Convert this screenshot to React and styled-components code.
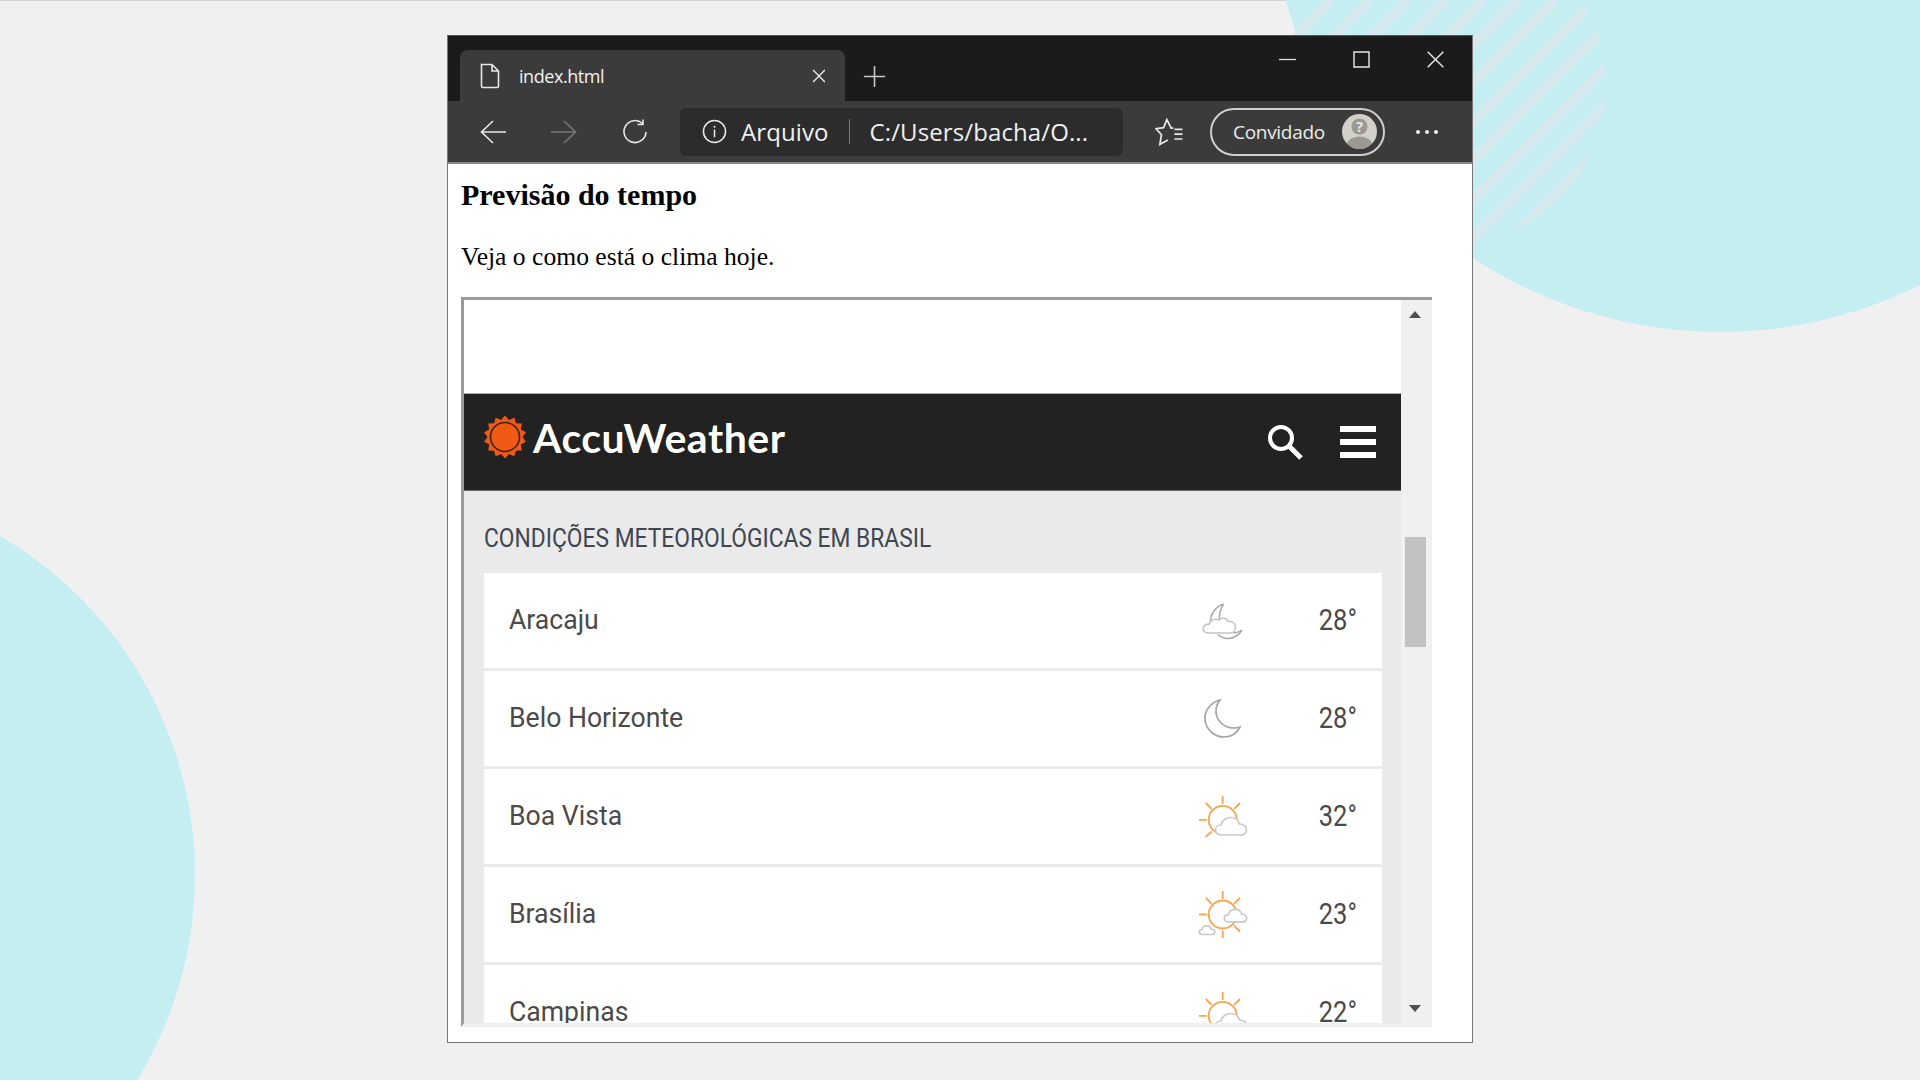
import React from 'react';
import styled, { createGlobalStyle } from 'styled-components';

const GlobalStyle = createGlobalStyle`
	html, body {
		margin: 0;
		padding: 0;
	}
	* {
		box-sizing: border-box;
	}
`;

const Page = styled.div`
	position: relative;
	width: 1920px;
	height: 1080px;
	overflow: hidden;
	background: #f0f0f0;
	padding: 35px 0 0 447px;
`;
const TopLine = styled.div`
	position: absolute;
	top: 0;
	left: 0;
	width: 1288px;
	height: 1px;
	background: #d2d2d2;
`;
const Blob = styled.div`
	position: absolute;
	left: ${(p) => p.$x - p.$r}px;
	top: ${(p) => p.$y - p.$r}px;
	width: ${(p) => p.$r * 2}px;
	height: ${(p) => p.$r * 2}px;
	border-radius: 50%;
	background: #c5eef2;
`;
const Stripes = styled.svg`
	position: absolute;
	top: 0;
	left: 1280px;
`;

const Window = styled.div`
	position: relative;
	display: flex;
	flex-direction: column;
	width: 1026px;
	height: 1008px;
	background: #fff;
	border: 1px solid #777;
	border-top-color: #555;
`;
const TitleBar = styled.div`
	display: flex;
	align-items: flex-start;
	height: 65px;
	padding-left: 12px;
	background: #1b1b1b;
`;
const Tab = styled.div`
	display: flex;
	align-items: center;
	width: 385px;
	height: 51px;
	margin-top: 14px;
	padding: 0 19px 0 17px;
	background: #3b3b3b;
	border-radius: 8px 8px 0 0;
	color: #f2f2f2;
	font: 400 18px 'Open Sans', sans-serif;
	letter-spacing: -0.45px;
`;
const TabName = styled.span`
	margin-left: 16px;
	flex: 1;
`;
const NewTab = styled.div`
	display: flex;
	justify-content: center;
	width: 58px;
	margin-top: 29px;
`;
const WindowControls = styled.div`
	display: flex;
	margin-left: auto;
`;
const WindowButton = styled.div`
	display: flex;
	align-items: center;
	justify-content: center;
	width: 74px;
	height: 46px;
`;

const Toolbar = styled.div`
	display: flex;
	align-items: center;
	height: 63px;
	padding-left: 9px;
	background: #3b3b3b;
	border-bottom: 2px solid #8a8a8a;
`;
const NavButton = styled.div`
	display: flex;
	align-items: center;
	justify-content: center;
	width: 71px;
`;
const Address = styled.div`
	display: flex;
	align-items: center;
	width: 443px;
	height: 48px;
	margin-left: 10px;
	padding-left: 22px;
	background: #2c2c2c;
	border-radius: 6px;
	color: #f0f0f0;
	font: 400 24px 'Open Sans', sans-serif;
	letter-spacing: 0.1px;
`;
const AddressLabel = styled.span`
	margin-left: 14px;
`;
const AddressDivider = styled.span`
	width: 1px;
	height: 25px;
	margin: 0 20px;
	background: #777;
`;
const Favorites = styled.div`
	display: flex;
	margin-left: 32px;
`;
const ProfilePill = styled.div`
	display: flex;
	align-items: center;
	justify-content: space-between;
	width: 175px;
	height: 48px;
	margin-left: 27px;
	padding: 0 6px 0 21px;
	border: 2px solid #cfcfcf;
	border-radius: 24px;
	color: #ececec;
	font: 400 19px 'Open Sans', sans-serif;
	letter-spacing: -0.3px;
`;
const MoreDots = styled.div`
	display: flex;
	gap: 5px;
	margin-left: 31px;
`;
const Dot = styled.span`
	width: 4px;
	height: 4px;
	border-radius: 50%;
	background: #eee;
`;

const Content = styled.div`
	flex: 1;
	padding: 14px 0 0 13px;
	min-height: 0;
`;
const Heading = styled.h1`
	margin: 0;
	font: 700 30px/34px 'Liberation Serif', serif;
	color: #000;
`;
const Intro = styled.p`
	margin: 30px 0 25px;
	font: 400 25.6px/30px 'Liberation Serif', serif;
	color: #000;
`;
const Frame = styled.div`
	display: flex;
	width: 971px;
	height: 730px;
	border-style: solid;
	border-width: 3px 0 4px 3px;
	border-color: #9a9a9a #eee #eee #9a9a9a;
`;
const FrameBody = styled.div`
	flex: 1;
	min-width: 0;
	overflow: hidden;
	background: #eaeaea;
`;
const AdSlot = styled.div`
	height: 93px;
	background: #fff;
`;
const SiteHeader = styled.div`
	display: flex;
	align-items: center;
	height: 98px;
	padding: 0 25px 0 19px;
	background: #222;
	border-top: 1px solid #aaa;
	border-bottom: 1px solid #666;
`;
const Logo = styled.div`
	display: flex;
	align-items: center;
	gap: 6px;
	margin-bottom: 10px;
	color: #fff;
	font: 700 41px 'Lato', sans-serif;
	letter-spacing: 0.5px;
`;
const HeaderIcons = styled.div`
	display: flex;
	align-items: center;
	gap: 37px;
	margin-left: auto;
`;
const Section = styled.div`
	padding: 0 19px 0 20px;
`;
const SectionTitle = styled.div`
	height: 82px;
	padding-top: 33px;
	color: #3f4650;
	font: 400 25px/30px 'Roboto', sans-serif;
	white-space: nowrap;
	transform: scaleX(0.912);
	transform-origin: left;
`;
const CityRow = styled.div`
	display: flex;
	align-items: center;
	height: 95px;
	margin-bottom: 3px;
	padding: 0 25px;
	background: #fff;
`;
const CityName = styled.span`
	flex: 1;
	margin-bottom: 2px;
	color: #4a4a4a;
	font: 400 28px 'Roboto', sans-serif;
	transform: scaleX(0.95);
	transform-origin: left;
`;
const WeatherIcon = styled.svg`
	flex: none;
`;
const CityTemp = styled.span`
	width: 104px;
	margin-bottom: 2px;
	text-align: right;
	color: #4a4a4a;
	font: 400 29px 'Roboto', sans-serif;
	transform: scaleX(0.88);
	transform-origin: right;
`;
const Scrollbar = styled.div`
	display: flex;
	flex-direction: column;
	align-items: center;
	width: 31px;
	padding-right: 3px;
	background: #f0f0f0;
`;
const ScrollArrow = styled.div`
	width: 0;
	height: 0;
	margin: ${(p) => (p.$down ? 'auto 0 11px' : '11px 0 0')};
	border-left: 6px solid transparent;
	border-right: 6px solid transparent;
	border-top: ${(p) => (p.$down ? '7px solid #505050' : 'none')};
	border-bottom: ${(p) => (p.$down ? 'none' : '7px solid #505050')};
`;
const ScrollThumb = styled.div`
	width: 21px;
	height: 110px;
	margin-top: 219px;
	background: #c1c1c1;
`;

const Line = ({ d, color = '#e8e8e8', width = 1.6, size = 26, ...rest }) => (
	<svg width={size} height={size} viewBox="0 0 26 26" fill="none" stroke={color} strokeWidth={width} {...rest}>
		<path d={d} />
	</svg>
);

const sunRim = Array.from({ length: 28 }, (_, i) => {
	const r = i % 2 ? 17.5 : 21.5;
	const a = (i * Math.PI) / 14 - Math.PI / 2;
	return `${(22 + r * Math.cos(a)).toFixed(2)},${(22 + r * Math.sin(a)).toFixed(2)}`;
}).join(' ');

const SunLogo = () => (
	<svg width="44" height="44" viewBox="0 0 44 44">
		<polygon points={sunRim} fill="#f05a14" />
		<circle cx="22" cy="22" r="14.5" fill="#f05a14" stroke="#3c2317" strokeWidth="1.6" />
	</svg>
);

const CLOUD = 'M6 18C2.5 18 .5 15.5 .5 13 .5 10 3 8 6 8 7 3.5 11 .5 15.5 .5 20 .5 23.5 3.5 24.5 7 28.5 7 31.5 9.5 31.5 13 31.5 16 29 18 26 18Z';

const Cloud = ({ x, y, scale = 1 }) => (
	<path d={CLOUD} transform={`translate(${x} ${y}) scale(${scale})`} fill="#fff" stroke="#c9c9c9" strokeWidth={1.7 / scale} />
);

const MoonCloud = () => (
	<WeatherIcon width="60" height="60" viewBox="0 0 60 60" fill="none" stroke="#a9a9a9" strokeWidth="1.5">
		<path d="M30.5 13C22 16 17 24 17.5 31M30.5 13C27.5 18 26 23 26.5 28M25 43.5C31 49.5 43 49 49 39 46 41 43 42 40 41.5" />
		<path d="M15 42C11 42 9.5 39 10.5 36.5 11.5 34 14 33 16 33.5 17 29 22 27 26 29 29 26 34 27 35 30.5 40 30 43 33 42.5 37 42 40.5 39.5 42 37 42Z" fill="#fff" stroke="#c4c4c4" />
	</WeatherIcon>
);

const Moon = () => (
	<WeatherIcon width="60" height="60" viewBox="0 0 60 60" fill="none" stroke="#a6a6a6" strokeWidth="1.7">
		<path d="M27 11C16 14 11 24 12 31 13 41 22 48 31 48 38 48 44 44 47 38 37 41 28 37 24 28 22 22 23 16 27 11Z" />
	</WeatherIcon>
);

const SunCloud = () => (
	<WeatherIcon width="60" height="60" viewBox="0 0 60 60" fill="none">
		<g stroke="#f9a44f" strokeWidth="1.8">
			<circle cx="29.7" cy="32.8" r="14" />
			<path d="M29.7 9V17M6 32.8H13.7M12.7 16 18.7 21.8M47 16 41 21.8M12.7 50 18.7 44.5" />
		</g>
		<Cloud x={22} y={30} />
	</WeatherIcon>
);

const SunClouds = () => (
	<WeatherIcon width="60" height="60" viewBox="0 0 60 60" fill="none">
		<g stroke="#f9a44f" strokeWidth="1.8">
			<circle cx="29.7" cy="29.5" r="14" />
			<path d="M29.7 6V14M29.7 45.5V53M6 29.5H13.7M12.7 12.8 18.7 18.8M47 12.8 41 18.8M47 46.5 41 40.5" />
		</g>
		<Cloud x={31} y={24} scale={0.72} />
		<Cloud x={6} y={40.5} scale={0.5} />
	</WeatherIcon>
);

const cities = [
	{ name: 'Aracaju', temp: '28°', Icon: MoonCloud },
	{ name: 'Belo Horizonte', temp: '28°', Icon: Moon },
	{ name: 'Boa Vista', temp: '32°', Icon: SunCloud },
	{ name: 'Brasília', temp: '23°', Icon: SunClouds },
	{ name: 'Campinas', temp: '22°', Icon: SunCloud },
];

const stripeStarts = [1331, 1370, 1408, 1446, 1483, 1518, 1555, 1595, 1633, 1673, 1711, 1750];

const App = () => (
	<>
		<GlobalStyle />
		<Page>
			<TopLine />
			<Blob $x={1720} $y={-118} $r={450} />
			<Blob $x={-197} $y={875} $r={392} />
			<Stripes width="340" height="260" viewBox="1280 0 340 260">
				<defs>
					<clipPath id="stripe-clip">
						<circle cx="1446" cy="85" r="160" />
					</clipPath>
				</defs>
				<g clipPath="url(#stripe-clip)" stroke="#d5e9ef" strokeWidth="10">
					{stripeStarts.map((x) => (
						<line key={x} x1={x} y1="0" x2={x - 300} y2="300" />
					))}
				</g>
			</Stripes>
			<Window>
				<TitleBar>
					<Tab>
						<Line size={26} d="M4.5 1.5H15L21.500 8V23A1.500 1.500 0 0 1 20 24.500H6A1.500 1.500 0 0 1 4.500 23ZM15 1.500V8H21.500" />
						<TabName>index.html</TabName>
						<Line size={14} width={2.6} d="M2 2 24 24M24 2 2 24" />
					</Tab>
					<NewTab>
						<Line size={23} d="M13 1V25M1 13H25" color="#c8c8c8" width={1.8} />
					</NewTab>
					<WindowControls>
						<WindowButton>
							<Line size={17} width={1.9} d="M0 13H26" />
						</WindowButton>
						<WindowButton>
							<Line size={17} width={2.2} d="M1.500 1.500H24.500V24.500H1.500Z" />
						</WindowButton>
						<WindowButton>
							<Line size={17} width={2.2} d="M1 1 25 25M25 1 1 25" />
						</WindowButton>
					</WindowControls>
				</TitleBar>
				<Toolbar>
					<NavButton>
						<Line d="M13 2 1.500 13 13 24M1.500 13H26" />
					</NavButton>
					<NavButton>
						<Line d="M13 2 24.500 13 13 24M24.500 13H0" color="#777" />
					</NavButton>
					<NavButton>
						<Line d="M20.500 4.500A11 11 0 1 0 24 13M21 .5V5.500H15.500" />
					</NavButton>
					<Address>
						<Line size={25} d="M13 1.500A11.500 11.500 0 1 1 13 24.500 11.500 11.500 0 0 1 13 1.500ZM13 11V19M13 7V9" />
						<AddressLabel>Arquivo</AddressLabel>
						<AddressDivider />
						<span>C:/Users/bacha/O...</span>
					</Address>
					<Favorites>
						<Line size={28} d="M17 9.500H15L11 1.500 8 9 1 10 6 15.500 4.500 24.500 12 20.500M18 10.500H25.500M18 15H25.500M18 19.500H25.500" />
					</Favorites>
					<ProfilePill>
						Convidado
						<svg width="35" height="35" viewBox="0 0 35 35">
							<clipPath id="avatar-clip">
								<circle cx="17.500" cy="17.500" r="17.500" />
							</clipPath>
							<g clipPath="url(#avatar-clip)">
								<rect width="35" height="35" fill="#d3d0ca" />
								<ellipse cx="17.500" cy="32" rx="13" ry="9.500" fill="#9b9791" />
								<circle cx="17.500" cy="12.500" r="8" fill="#9b9791" />
								<text x="17.500" y="18" textAnchor="middle" fill="#e8e6e2" fontFamily="'Open Sans', sans-serif" fontWeight="700" fontSize="15">?</text>
							</g>
						</svg>
					</ProfilePill>
					<MoreDots>
						<Dot />
						<Dot />
						<Dot />
					</MoreDots>
				</Toolbar>
				<Content>
					<Heading>Previsão do tempo</Heading>
					<Intro>Veja o como está o clima hoje.</Intro>
					<Frame>
						<FrameBody>
							<AdSlot />
							<SiteHeader>
								<Logo>
									<SunLogo />
									AccuWeather
								</Logo>
								<HeaderIcons>
									<svg width="36" height="36" viewBox="0 0 36 36" fill="none" stroke="#fff" strokeWidth="4">
										<circle cx="14" cy="14" r="11" />
										<path d="M22 22 34 34" strokeWidth="5" />
									</svg>
									<svg width="36" height="32" viewBox="0 0 36 32" fill="#fff">
										<rect width="36" height="6" />
										<rect y="13" width="36" height="6" />
										<rect y="26" width="36" height="6" />
									</svg>
								</HeaderIcons>
							</SiteHeader>
							<Section>
								<SectionTitle>CONDIÇÕES METEOROLÓGICAS EM BRASIL</SectionTitle>
								{cities.map(({ name, temp, Icon }) => (
									<CityRow key={name}>
										<CityName>{name}</CityName>
										<Icon />
										<CityTemp>{temp}</CityTemp>
									</CityRow>
								))}
							</Section>
						</FrameBody>
						<Scrollbar>
							<ScrollArrow />
							<ScrollThumb />
							<ScrollArrow $down />
						</Scrollbar>
					</Frame>
				</Content>
			</Window>
		</Page>
	</>
);

export default App;
